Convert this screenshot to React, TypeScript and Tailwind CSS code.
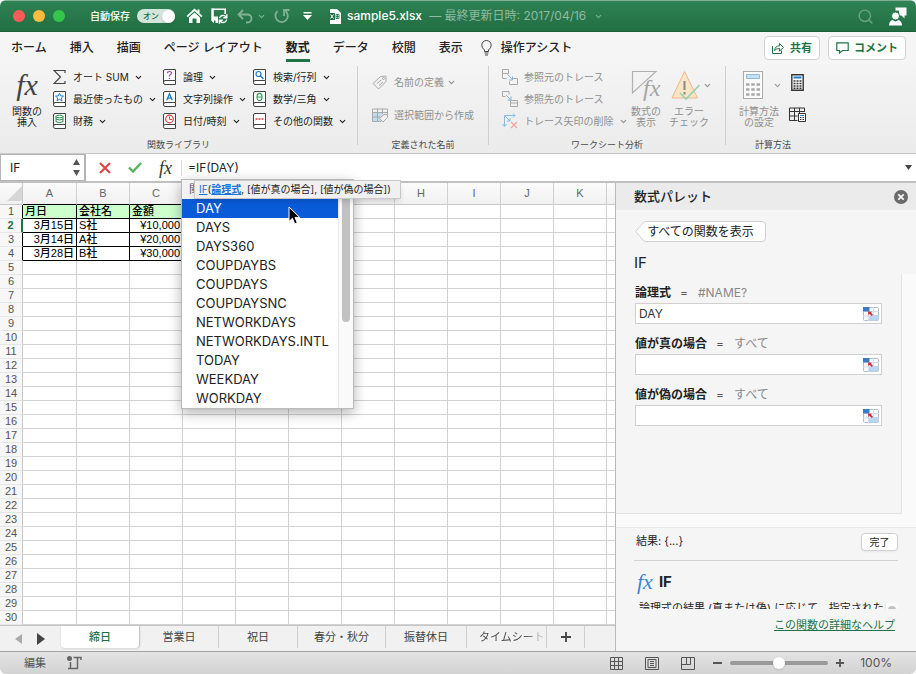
import React, { useState } from 'react';
import { ChevronDown, Search } from 'lucide-react';

const ribbonTabs = ['ホーム', '挿入', '描画', 'ページ レイアウト', '数式', 'データ', '校閲', '表示'];

const columns = ['A', 'B', 'C', 'D', 'E', 'F', 'G', 'H', 'I', 'J', 'K', 'L'];

const sheetData = [
  ['月日', '会社名', '金額'],
  ['3月15日', 'S社', '¥10,000'],
  ['3月14日', 'A社', '¥20,000'],
  ['3月28日', 'B社', '¥30,000'],
];

const suggestions = [
  'DAY',
  'DAYS',
  'DAYS360',
  'COUPDAYBS',
  'COUPDAYS',
  'COUPDAYSNC',
  'NETWORKDAYS',
  'NETWORKDAYS.INTL',
  'TODAY',
  'WEEKDAY',
  'WORKDAY',
];

const sheetTabs = [
  { name: '締日', width: 'w-[79px]' },
  { name: '営業日', width: 'w-[79px]' },
  { name: '祝日', width: 'w-[79px]' },
  { name: '春分・秋分', width: 'w-[88px]' },
  { name: '振替休日', width: 'w-[81px]' },
  { name: 'タイムシート', width: 'w-[80px]' },
];

const Chevron: React.FC<{ className?: string }> = ({ className = '' }) => (
  <ChevronDown size={9} strokeWidth={3} className={`shrink-0 ${className}`} />
);

const Fx: React.FC<{ className?: string }> = ({ className = '' }) => (
  <span className={`font-['Liberation_Serif',serif] font-normal italic ${className}`}>fx</span>
);

/* Book icon shared by the function categories */
const Book: React.FC<{ children?: React.ReactNode }> = ({ children }) => (
  <svg width="13" height="16" viewBox="0 0 13 16" fill="none" className="shrink-0">
    <path d="M12.5 11.5V.5H2Q.5.5.5 2v11.5Q.5 15.5 2 15.5h10.5v-4H2Q.5 11.5.5 13.5" fill="#fff" stroke="#444" />
    {children}
  </svg>
);

const SumIcon = () => (
  <svg width="13" height="16" viewBox="0 0 13 16" fill="none" stroke="#444" strokeWidth="1.2" className="shrink-0">
    <path d="M12 4V1.500H1L7.500 8 1 14.500h11V12" />
  </svg>
);

const libraryItems = [
  { label: 'オート SUM', icon: <SumIcon /> },
  {
    label: '論理',
    icon: (
      <Book>
        <path d="M4.500 4.200Q4.500 2.500 6.500 2.500T8.500 4.300Q8.500 5.300 6.500 6.300V7.500M6.500 8.700v1.300" stroke="#a33fb5" strokeWidth="1.200" />
      </Book>
    ),
  },
  {
    label: '検索/行列',
    icon: (
      <Book>
        <circle cx="5.500" cy="5" r="2.500" stroke="#1a7bd0" strokeWidth="1.200" />
        <path d="M7.300 6.800 10.500 10" stroke="#1a7bd0" strokeWidth="1.500" />
      </Book>
    ),
  },
  {
    label: '最近使ったもの',
    icon: (
      <Book>
        <path d="m6.500 2.200 1.100 2.700 2.900.2-2.200 1.900.7 2.900-2.500-1.600L4 9.900 4.700 7 2.500 5.100l2.900-.2Z" stroke="#1a7bd0" />
      </Book>
    ),
  },
  {
    label: '文字列操作',
    icon: (
      <Book>
        <path d="m3.800 9.300 2.700-6.600 2.700 6.600M4.800 7.200h3.400" stroke="#1a7bd0" strokeWidth="1.300" />
      </Book>
    ),
  },
  {
    label: '数学/三角',
    icon: (
      <Book>
        <ellipse cx="6.500" cy="6" rx="2.500" ry="3.700" stroke="#2ea05a" strokeWidth="1.200" />
        <path d="M4 6h5" stroke="#2ea05a" />
      </Book>
    ),
  },
  {
    label: '財務',
    icon: (
      <Book>
        <ellipse cx="6.500" cy="3.500" rx="3.500" ry="1.300" stroke="#1f8a46" />
        <path d="M3 3.500v5.200q3.500 2 7 0V3.500M3 6q3.500 2 7 0" stroke="#1f8a46" />
      </Book>
    ),
  },
  {
    label: '日付/時刻',
    icon: (
      <Book>
        <circle cx="6.500" cy="6" r="3.800" stroke="#e03a3a" strokeWidth="1.200" />
        <path d="M6.500 3.500V6.500H9" stroke="#e03a3a" />
      </Book>
    ),
  },
  {
    label: 'その他の関数',
    icon: (
      <Book>
        <path d="M2.500 6h2M5.500 6h2M8.500 6h2" stroke="#e03a3a" strokeWidth="1.500" />
      </Book>
    ),
  },
];

const TitleBar = () => {
  const [autoSave, setAutoSave] = useState(true);

  return (
    <header className="flex h-8 items-center border-t border-[#7fae93] border-b border-b-[#1c6038] bg-linear-to-b from-[#2f8355] to-[#216e42] pr-[9px] pl-[13px] text-white">
      <div className="flex gap-2">
        <button aria-label="閉じる" className="size-3 rounded-full bg-[#fc5b57]" />
        <button aria-label="しまう" className="size-3 rounded-full bg-[#fdbc40]" />
        <button aria-label="拡大" className="size-3 rounded-full bg-[#33c748]" />
      </div>
      <span className="ml-[25px] text-[10px] font-medium">自動保存</span>
      <button
        role="switch"
        aria-checked={autoSave}
        aria-label="自動保存"
        onClick={() => setAutoSave(!autoSave)}
        className="ml-[7px] flex h-3.5 w-[38px] items-center justify-between rounded-full bg-[#d3e4da] pl-1.5 text-[8px] font-medium text-[#216e42]"
      >
        オン
        <span className="size-[13px] rounded-full bg-white shadow-sm" />
      </button>
      <button aria-label="ホーム" className="ml-[11px]">
        <svg width="17" height="16" viewBox="0 0 17 16" fill="#fff">
          <path d="M8.500.5.500 8l1.200 1.300 6.800-6.400 6.800 6.400L16.500 8 13.500 5.200V1.500h-2v1.800Z" />
          <path d="M3 9.500 8.500 4.400 14 9.500V15h-3.500v-4.500h-4V15H3Z" />
        </svg>
      </button>
      <button aria-label="保存" className="ml-2">
        <svg width="17" height="16" viewBox="0 0 17 16" fill="none" stroke="#fff">
          <path d="M7 9.200H2.500M1 1.200h13.200V6" strokeWidth="1.600" />
          <path d="M.3.400h2.500v8.500h4.200V15H4.500v-2.500H3V15L.3 12.800Z" fill="#fff" stroke="none" />
          <path d="M8.500 10.200a3.600 3.600 0 0 1 6.500-1.200M15.800 6.200V9.700H12.300M15.700 11.500a3.600 3.600 0 0 1-6.500 1.500M8.400 15.700V12.300h3.400" strokeWidth="1.400" />
        </svg>
      </button>
      <button aria-label="元に戻す" className="ml-[9px] text-[#81b296]">
        <svg width="16" height="15" viewBox="0 0 16 15" fill="none" stroke="currentColor" strokeWidth="1.800">
          <path d="M6 1 1.500 5.500 6 10M1.500 5.500H10.500a4 4 0 0 1 0 8H9" />
        </svg>
      </button>
      <Chevron className="ml-1 text-[#81b296]" />
      <button aria-label="やり直し" className="ml-2 text-[#81b296]">
        <svg width="16" height="16" viewBox="0 0 16 16" fill="none" stroke="currentColor" strokeWidth="1.800">
          <path d="M3.500 3.200A6.200 6.200 0 1 0 11.500 3M10 8V2h5.500" />
        </svg>
      </button>
      <button aria-label="ツールバーのカスタマイズ" className="ml-[13px]">
        <svg width="9" height="9" viewBox="0 0 9 9" fill="#fff">
          <path d="M.5 0h8v1.500h-8ZM0 3h9L4.500 8Z" />
        </svg>
      </button>
      <svg width="12" height="15" viewBox="0 0 12 15" className="ml-[17px]">
        <path d="M1 0h7l4 4v11H1Z" fill="#fff" />
        <path d="M0 4h6v7H0Z" fill="#216e42" />
        <path d="m1.500 5.500 3 4m0-4-3 4" stroke="#fff" />
        <path d="M7 5.500h3v4H7ZM7 7.500h3M8.500 5.500v4" stroke="#216e42" strokeWidth=".8" fill="none" />
      </svg>
      <h1 className="ml-[6px] text-[12px] font-medium whitespace-nowrap">
        sample5.xlsx <span className="ml-1 font-normal text-[#8fbaa1]">— 最終更新日時: 2017/04/16</span>
      </h1>
      <Chevron className="ml-2 text-[#81b296]" />
      <button aria-label="検索" className="ml-auto text-[#6aa482]">
        <Search size={17} strokeWidth={2} />
      </button>
      <button aria-label="アカウント" className="ml-[15px]">
        <svg width="18" height="19" viewBox="0 0 18 19" fill="none">
          <path d="M6.500.500H17.500v8h-2v3l-3-3H10V3.500H6.500Z" fill="#fff" />
          <circle cx="6.500" cy="9" r="4" fill="#fff" stroke="#26764a" />
          <path d="M0 18.500q0-4.500 3.500-5.500l3 1.500 3-1.500q3.500 1 3.500 5.500Z" fill="#fff" />
        </svg>
      </button>
    </header>
  );
};

const RibbonTabs = () => {
  const [active, setActive] = useState('数式');

  return (
    <nav className="flex h-8 items-center bg-[#f5f5f5] pr-2.5 pl-[11px] text-[12px] font-medium text-[#222]">
      <div className="flex items-center gap-[23px]">
        {ribbonTabs.map((tab) => (
          <button
            key={tab}
            onClick={() => setActive(tab)}
            className={`h-7 border-b-3 pt-0.5 whitespace-nowrap ${active === tab ? 'border-[#217346] font-bold' : 'border-transparent'}`}
          >
            {tab}
          </button>
        ))}
      </div>
      <button className="ml-[18px] flex items-center gap-[9px] whitespace-nowrap">
        <svg width="11" height="16" viewBox="0 0 11 16" fill="none" stroke="#444">
          <path d="M3.500 11.500V10Q.8 8 .8 5.200a4.700 4.700 0 0 1 9.400 0Q10.200 8 7.500 10v1.500ZM3.500 13h4M4 15h3" />
        </svg>
        操作アシスト
      </button>
      <button className="ml-auto flex h-6 items-center gap-1.5 rounded border border-[#d2d2d2] bg-white px-[7px] text-[11px] font-bold text-[#217346]">
        <svg width="12" height="12" viewBox="0 0 12 12" fill="none" stroke="currentColor">
          <path d="M.5 4v7.500h9V8.500M2.500 8.500Q3 4 7.500 3.800V1.500l4 4-4 3.500V6.500Q4.500 6.300 2.500 8.500Z" />
        </svg>
        共有
      </button>
      <button className="ml-2 flex h-6 items-center gap-[5px] rounded border border-[#d2d2d2] bg-white px-[7px] text-[11px] font-bold text-[#217346]">
        <svg width="13" height="12" viewBox="0 0 13 12" fill="none" stroke="currentColor" strokeWidth="1.200">
          <path d="M.8.8h11.400v7.700H6.500L3.500 11V8.500H.8Z" />
        </svg>
        コメント
      </button>
    </nav>
  );
};

const GroupLabel: React.FC<{ children: React.ReactNode }> = ({ children }) => (
  <p className="h-5 pt-px text-center text-[9px] leading-6 text-[#4a4a4a]">{children}</p>
);

const Divider = () => <div className="h-[79px] w-px shrink-0 bg-[#cfcfcf]" />;

const Ribbon = () => (
  <section className="flex border-b border-[#c6c6c6] bg-linear-to-b from-[#f4f4f4] to-[#ebebeb] pt-0.5 pb-px text-[10px] whitespace-nowrap text-[#222]">
    <div className="w-[357px] shrink-0">
      <div className="flex h-[66px] pl-[11px]">
        <button className="flex w-8 shrink-0 flex-col items-center leading-[11px]">
          <Fx className="h-10 pt-1 text-[30px] leading-[30px] text-[#444]" />
          関数の
          <br />
          挿入
        </button>
        <div className="ml-[10px] grid grid-cols-[110px_90px_auto] grid-rows-[22px_22px_22px]">
          {libraryItems.map(({ label, icon }) => (
            <button key={label} className="flex items-center">
              {icon}
              <span className="ml-[7px]">{label}</span>
              <Chevron className="ml-[5px]" />
            </button>
          ))}
        </div>
      </div>
      <GroupLabel>関数ライブラリ</GroupLabel>
    </div>
    <Divider />
    <div className="w-[130px] shrink-0 text-[#8f8f8f]">
      <div className="flex h-[66px] flex-col justify-between pt-[9px] pb-[9px] pl-[14px]">
        <button className="flex items-center gap-[7px]" disabled>
          <svg width="15" height="15" viewBox="0 0 15 15" fill="none" stroke="#a9a9a9">
            <path d="M1 8.500 8.500 1.500 14 1v5.500L6.500 14Z" />
            <circle cx="11.500" cy="3.500" r="1" />
            <path d="m5 8.500 4-3.500M7 10.500l4-3.500" />
          </svg>
          名前の定義
          <Chevron className="-ml-1" />
        </button>
        <button className="flex items-center gap-[6px]" disabled>
          <svg width="16" height="15" viewBox="0 0 16 15" fill="none" stroke="#a9a9a9">
            <path d="M.5 4.500h10v9H.5Z" fill="#bfdcf0" stroke="none" />
            <path d="M9 13.500H.5V1h15v5M.5 4.500h15M.5 9H8M5.500 1v12.500M10.500 1v5" />
            <path d="M7.500 10.500 12 6.500l3.500-.3V9.500L11 14Z" fill="#f0f0f0" />
          </svg>
          選択範囲から作成
        </button>
      </div>
      <GroupLabel>定義された名前</GroupLabel>
    </div>
    <Divider />
    <div className="w-[236px] shrink-0 text-[#8f8f8f]">
      <div className="flex h-[66px] pl-[13px]">
        <div className="grid w-[122px] shrink-0 grid-rows-[22px_22px_22px]">
          <button className="flex items-center gap-[6px]" disabled>
            <svg width="16" height="16" viewBox="0 0 16 16" fill="none" stroke="#a9a9a9">
              <path d="M.5.5h6v4h-6ZM.5 4.500v5h4M10.500 9.500h5v6h-8v-3" />
              <path d="m5.500 5.500 5 5M10.500 7.500V11H7" stroke="#7fb5de" />
            </svg>
            参照元のトレース
          </button>
          <button className="flex items-center gap-[6px]" disabled>
            <svg width="16" height="16" viewBox="0 0 16 16" fill="none" stroke="#a9a9a9">
              <path d="M5 .5H.5v5h3M5 .5h2v3M8.500 9.500h7v6h-7ZM8.500 12h7" />
              <path d="m4 4 5 5M9 5.500V9H5.500" stroke="#7fb5de" />
            </svg>
            参照先のトレース
          </button>
          <button className="flex items-center gap-[6px]" disabled>
            <svg width="16" height="16" viewBox="0 0 16 16" fill="none">
              <path d="M2.500 13V2.500H13M11 .5l2 2-2 2M.5 11l2 2.500 2-2.500M3 3l5 5M8 5v3H5" stroke="#86bce3" />
              <path d="m9 9 6 6m0-6-6 6" stroke="#efa3a3" strokeWidth="1.200" />
            </svg>
            トレース矢印の削除
            <Chevron className="-ml-px" />
          </button>
        </div>
        <button className="ml-[7px] flex w-[30px] flex-col items-center leading-[11px]" disabled>
          <span className="relative h-10 w-[30px] pt-[5px]">
            <svg width="30" height="26" viewBox="0 0 30 26" fill="none" stroke="#b0b0b0">
              <path d="M25 .5H1.500V22Z" strokeWidth="1.200" />
            </svg>
            <Fx className="absolute top-2.5 left-3 text-[24px] leading-6 text-[#a5a5a5]" />
          </span>
          数式の
          <br />
          表示
        </button>
        <button className="ml-2 flex flex-col items-center leading-[11px]" disabled>
          <span className="mr-1.5 flex h-10 items-start pt-1">
            <svg width="30" height="31" viewBox="0 0 30 31" fill="none">
              <path d="M13.500 1.500 26.500 28H1Z" fill="#fae5c4" stroke="#f0b58c" />
              <path d="M13.500 11v9M13.500 22v2.500" stroke="#8a8a8a" strokeWidth="2" />
              <path d="m9 23 6 6L28.500 15" stroke="#96d1b0" strokeWidth="1.600" />
            </svg>
          </span>
          エラー
          <br />
          チェック
        </button>
        <Chevron className="mt-[15px] -ml-1.5" />
      </div>
      <GroupLabel>ワークシート分析</GroupLabel>
    </div>
    <Divider />
    <div className="w-[94px] shrink-0">
      <div className="flex h-[66px] pl-[13px]">
        <button className="flex flex-col items-center leading-[11px] text-[#8f8f8f]" disabled>
          <svg width="20" height="40" viewBox="0 0 20 40" fill="none" className="mr-3">
            <rect x=".5" y="5.500" width="19" height="27" fill="#fafafa" stroke="#a9a9a9" />
            <path d="M3.500 8.500h13v4h-13Z" fill="#c6e0f2" stroke="#8fbcdb" />
            <path d="M3 18.500h14M3 23.500h14M3 28.500h14" stroke="#a9a9a9" strokeWidth="2.500" strokeDasharray="3.500 1.750" />
          </svg>
          計算方法
          <br />
          の設定
        </button>
        <Chevron className="mt-[15px] -ml-1.5 text-[#999]" />
        <div className="ml-[7px] flex flex-col gap-4 pt-2">
          <button aria-label="再計算実行" className="flex justify-center">
            <svg width="13" height="17" viewBox="0 0 13 17" fill="none">
              <path d="M.8.8h11.400v15.400H.8Z" fill="#fff" stroke="#333" strokeWidth="1.400" />
              <path d="M2.500 3.500h8" stroke="#1a7bd0" strokeWidth="2" />
              <path d="M2.500 7h8M2.500 9.500h8M2.500 12h8M2.500 14.300h8" stroke="#333" strokeWidth="1.500" strokeDasharray="2 1" />
            </svg>
          </button>
          <button aria-label="シート再計算" className="flex">
            <svg width="17" height="15" viewBox="0 0 17 15" fill="none" stroke="#333">
              <path d="M8.500 13.500H.5V1h15v4M.5 4.500h15M.5 9h8M5.500 1v12.500M10.500 1v5" />
              <path d="M9.500 6.500h7v8h-7Z" fill="#fff" />
              <path d="M11 8.500h4" stroke="#1a7bd0" />
              <path d="M11 10.500h4M11 12.500h4" strokeDasharray="1 .5" />
            </svg>
          </button>
        </div>
      </div>
      <GroupLabel>計算方法</GroupLabel>
    </div>
  </section>
);

const FunctionPopup = () => (
  <div className="absolute top-[25px] left-0 z-10 w-[173px] border border-[#b9b9b9] bg-white shadow-[0_4px_12px_rgba(0,0,0,0.3)]">
    <p className="h-[19px] bg-[#f3f3f3] pl-[7px] text-[11px] leading-[19px] text-[#555]">関数</p>
    <div className="flex">
      <ul className="flex-1 text-[13px] leading-[19px] text-[#222]">
        {suggestions.map((name, i) => (
          <li key={name} className={`h-[19px] pl-[14px] ${i === 0 ? 'bg-[#0a5bd8] text-white' : ''}`}>
            {name}
          </li>
        ))}
      </ul>
      <div className="w-[15px] border-l border-[#e8e8e8] bg-[#fafafa] px-[3px]">
        <div className="h-[123px] rounded-b-full bg-[#c1c1c1]" />
      </div>
    </div>
    <div className="absolute top-0 left-[12px] h-[19px] border border-[#c8c8c8] bg-[#f0f0f0] pr-[9px] pl-1 text-[10px] leading-[17px] whitespace-nowrap text-[#222] shadow-md">
      <a href="#if" className="text-[#1a73d9] underline">IF</a>(
      <a href="#arg" className="font-bold text-[#1a73d9] underline">論理式</a>, [値が真の場合], [値が偽の場合])
    </div>
    <svg width="13" height="19" viewBox="0 0 13 19" className="absolute top-[26px] left-[106px]">
      <path d="M1 1v14.500l3.400-3.200 2.300 5.500 2.600-1.100L7 11.400h4.700Z" fill="#000" stroke="#fff" />
    </svg>
  </div>
);

const FormulaBar = () => {
  const [formula, setFormula] = useState('=IF(DAY)');

  return (
    <section className="flex h-[29px] border-b-2 border-[#c0c0c0] bg-white">
      <div className="flex w-[86px] shrink-0 items-center border border-[#b5b5b5] border-r-2">
        <input aria-label="名前ボックス" defaultValue="IF" className="w-0 flex-1 pl-[9px] text-[12px] text-[#222] outline-none" />
        <button aria-label="セル選択" className="mr-1">
          <svg width="7" height="17" viewBox="0 0 7 17" fill="#555">
            <path d="M3.500 0 7 6H0ZM3.500 17 7 11H0Z" />
          </svg>
        </button>
      </div>
      <div className="flex w-[95px] shrink-0 items-center pl-[13px]">
        <button aria-label="キャンセル">
          <svg width="12" height="12" viewBox="0 0 12 12" stroke="#e04848" strokeWidth="2.200">
            <path d="m1 1 10 10M11 1 1 11" />
          </svg>
        </button>
        <button aria-label="入力" className="ml-[17px]">
          <svg width="14" height="11" viewBox="0 0 14 11" fill="none" stroke="#55b559" strokeWidth="2.400">
            <path d="m1 5.500 4 4L13 1" />
          </svg>
        </button>
        <button aria-label="関数の挿入" className="ml-[17px] flex">
          <Fx className="text-[18px] leading-5 text-[#333]" />
        </button>
      </div>
      <div className="relative flex min-w-0 flex-1 items-center">
        <input
          aria-label="数式バー"
          value={formula}
          onChange={(e) => setFormula(e.target.value)}
          className="h-4 min-w-0 flex-1 border-l border-[#ddd] pl-1.5 text-[12px] text-[#222] outline-none"
        />
        <button aria-label="数式バーの展開" className="mr-1">
          <svg width="7" height="5" viewBox="0 0 7 5" fill="#444">
            <path d="M0 0h7L3.500 5Z" />
          </svg>
        </button>
        <FunctionPopup />
      </div>
    </section>
  );
};

const Grid = () => (
  <table className="w-[659px] table-fixed border-separate border-spacing-0 bg-white font-['Liberation_Sans','Noto_Sans_CJK_JP',sans-serif] text-[11px] leading-[13px]">
    <colgroup>
      <col className="w-[23px]" />
      <col className="w-[54px]" />
      {columns.slice(1).map((c) => (
        <col key={c} className="w-[53px]" />
      ))}
    </colgroup>
    <thead>
      <tr className="h-[22px] bg-linear-to-b from-[#fbfbfb] to-[#f0f0f0] text-[#666]">
        <th className="border-r border-b border-[#c9c9c9] p-0">
          <svg width="15" height="15" viewBox="0 0 15 15" className="ml-auto block">
            <path d="M15 0v15H0Z" fill="#d6d6d6" />
          </svg>
        </th>
        {columns.map((c, i) => (
          <th key={c} className={`border-r border-b border-r-[#d0d0d0] p-0 font-normal ${i < 3 ? 'border-b-black' : 'border-b-[#c9c9c9]'}`}>
            {c}
          </th>
        ))}
      </tr>
    </thead>
    <tbody>
      {Array.from({ length: 30 }, (_, r) => (
        <tr key={r} className="h-[14px]">
          <th
            className={`border-r border-b border-b-[#e6e6e6] bg-[#f7f7f7] p-0 ${
              r === 1 ? 'border-r-2 border-r-[#217346] font-bold text-[#217346]' : r < 4 ? 'border-r-black font-normal text-[#555]' : 'border-r-[#c9c9c9] font-normal text-[#555]'
            }`}
          >
            {r + 1}
          </th>
          {columns.map((c, i) => {
            const filled = r < 4 && i < 3;
            return (
              <td
                key={c}
                className={`overflow-hidden border-r border-b p-0 whitespace-nowrap ${filled ? 'border-black pl-0.5 font-medium text-black' : 'border-[#d2d2d2]'} ${
                  filled && r === 0 ? 'bg-[#ccffcc]' : ''
                } ${filled && r > 0 && i !== 1 ? 'pr-0.5 text-right' : ''}`}
              >
                {filled ? sheetData[r][i] : null}
              </td>
            );
          })}
        </tr>
      ))}
    </tbody>
  </table>
);

const SheetTabs = () => {
  const [active, setActive] = useState('締日');

  return (
    <nav className="flex h-[26px] border-t border-[#c6c6c6] bg-[#f1f1f1] text-[11px] text-[#444]">
      <div className="flex w-[61px] shrink-0 items-center gap-[15px] pl-[15px]">
        <button aria-label="前のシート">
          <svg width="7" height="10" viewBox="0 0 7 10" fill="#aaa">
            <path d="M7 0v10L0 5Z" />
          </svg>
        </button>
        <button aria-label="次のシート">
          <svg width="8" height="12" viewBox="0 0 8 12" fill="#444">
            <path d="M0 0v12l8-6Z" />
          </svg>
        </button>
      </div>
      {sheetTabs.map(({ name, width }, i) => (
        <button
          key={name}
          onClick={() => setActive(name)}
          className={`h-[22px] shrink-0 overflow-hidden border-r whitespace-nowrap ${width} ${
            active === name ? 'rounded-b border-[#c6c6c6] bg-white font-medium text-[#217346] shadow' : 'border-[#cfcfcf]'
          } ${i === sheetTabs.length - 1 ? 'bg-linear-to-r from-[#444] from-70% to-[#eaeaea] bg-clip-text pl-3 text-left text-transparent' : ''}`}
        >
          {name}
        </button>
      ))}
      <button aria-label="シートの追加" className="flex h-[22px] w-[38px] shrink-0 items-center justify-center border-r border-[#cfcfcf]">
        <svg width="10" height="10" viewBox="0 0 10 10" stroke="#444" strokeWidth="1.800">
          <path d="M5 0v10M0 5h10" />
        </svg>
      </button>
    </nav>
  );
};

const ArgumentField: React.FC<{ id: string; label: string; result: string; value?: string }> = ({ id, label, result, value = '' }) => (
  <div className="mb-[10px] text-[12px]">
    <div className="flex h-5 items-center">
      <label htmlFor={id} className="font-bold text-[#222]">{label}</label>
      <span className="ml-[9px] text-[#555]">=</span>
      <span className="ml-[10px] text-[#888]">{result}</span>
    </div>
    <div className="flex h-[21px] items-center border border-[#d0d0d0] bg-white pr-0.5">
      <input id={id} defaultValue={value} className="min-w-0 flex-1 pl-[3px] text-[#333] outline-none" />
      <button aria-label={`${label}のセル範囲を選択`}>
        <svg width="16" height="14" viewBox="0 0 16 14" fill="none">
          <rect x=".5" y=".5" width="15" height="13" rx="1" fill="#f7f9fb" stroke="#b4bcc8" />
          <path d="M0 4.500h16M0 9h16M5.500 0v14M10.500 0v14" stroke="#d5dde6" />
          <path d="M0 0h6.500v4.500H0Z" fill="#3a7bc8" />
          <path d="M9 8h6.500v5.500H6V9.500Z" fill="#b9d5ef" />
          <path d="m5 4.500 4 .3-1 1L10 7.800 8.700 9 6.700 7l-1.300 1Z" fill="#c93030" />
        </svg>
      </button>
    </div>
  </div>
);

const FormulaPalette = () => (
  <aside className="flex w-[301px] shrink-0 flex-col border-l border-[#b9b9b9] bg-[#f5f5f5] text-[#222]">
    <div className="flex h-[27px] items-center justify-between bg-[#ebebeb] pr-2 pl-[18px]">
      <h2 className="text-[13px] font-medium">数式パレット</h2>
      <button aria-label="閉じる">
        <svg width="14" height="14" viewBox="0 0 14 14" fill="none">
          <circle cx="7" cy="7" r="7" fill="#6b6b6b" />
          <path d="m4.300 4.300 5.400 5.400m0-5.400L4.300 9.700" stroke="#fff" strokeWidth="1.800" />
        </svg>
      </button>
    </div>
    <button className="relative mt-[11px] ml-[19px] h-[21px] w-[131px] text-[12px]">
      <svg width="131" height="21" viewBox="0 0 131 21" className="absolute inset-0">
        <path d="M.7 10.500 8 2Q9.300.5 11 .5H127q3.500 0 3.500 3.500v13q0 3.500-3.500 3.500H11q-1.700 0-3-1.500Z" fill="#fff" stroke="#d0d0d0" />
      </svg>
      <span className="relative">すべての関数を表示</span>
    </button>
    <h3 className="ml-[18px] pt-[10px] text-[15px] leading-[22px]">IF</h3>
    <div className="flex h-[240px]">
      <div className="flex-1 border-r border-b border-[#e2e2e2] pt-[9px] pr-[19px] pl-[19px]">
        <ArgumentField id="arg-test" label="論理式" result="#NAME?" value="DAY" />
        <ArgumentField id="arg-true" label="値が真の場合" result="すべて" />
        <ArgumentField id="arg-false" label="値が偽の場合" result="すべて" />
      </div>
      <div className="w-[14px] bg-[#fafafa]" />
    </div>
    <div className="h-[13px] bg-[#fafafa]" />
    <div className="border-t border-[#e8e8e8] pr-[18px] pl-[18px]">
      <div className="flex h-[27px] items-center justify-between text-[11px]">
        <output className="pl-0.5">結果: {'{...}'}</output>
        <button className="h-[18px] w-[37px] rounded border border-[#cfcfcf] bg-white text-[10px] leading-4 shadow-xs">完了</button>
      </div>
      <hr className="mt-[5px] border-[#d4d4d4]" />
      <div className="mt-[7px] flex h-7 items-center gap-1.5 pl-[3px] text-[15px] font-bold">
        <Fx className="text-[22px] leading-6 text-[#3a87d8]" />
        IF
      </div>
      <div className="mt-[5px] flex h-[8px] justify-between overflow-hidden pl-[5px] text-[11px] leading-[15px] whitespace-nowrap">
        <p>論理式の結果 (真または偽) に応じて、指定された</p>
        <div className="mt-0.5 h-5 w-[13px] shrink-0 border-l border-[#e6e6e6] bg-[#fafafa] px-0.5 pt-[3px]">
          <div className="h-5 rounded-full bg-[#c1c1c1]" />
        </div>
      </div>
      <p className="mt-2 pr-[3px] text-right text-[11px]">
        <a href="#help" className="text-[#217346] underline">この関数の詳細なヘルプ</a>
      </p>
    </div>
  </aside>
);

const StatusBar = () => (
  <footer className="flex h-[23px] items-center border-t border-[#a3a3a3] bg-linear-to-b from-[#e3e3e3] to-[#d3d3d3] pr-6 pl-6 text-[11px] text-[#555]">
    <span>編集</span>
    <button aria-label="マクロの記録" className="ml-[21px]">
      <svg width="15" height="14" viewBox="0 0 15 14" fill="none" stroke="#666" strokeWidth="1.500">
        <circle cx="2.500" cy="2.500" r="2.500" fill="#666" stroke="none" />
        <path d="M3.500 6v6.500M1 12.500h9.500V1.500M6.500 1.500h7.500v2.500" />
      </svg>
    </button>
    <div className="ml-auto flex items-center gap-[22px]">
      <button aria-label="標準">
        <svg width="13" height="13" viewBox="0 0 13 13" fill="none" stroke="#555">
          <path d="M.5.5h12v12H.5ZM.5 4.500h12M.5 8.500h12M4.500.5v12M8.500.5v12" />
        </svg>
      </button>
      <button aria-label="ページ レイアウト">
        <svg width="14" height="13" viewBox="0 0 14 13" fill="none" stroke="#555">
          <path d="M.5.5h13v12H.5ZM3 2.500h8v8H3ZM5 4.500h4M5 6.500h4M5 8.500h4" />
        </svg>
      </button>
      <button aria-label="改ページ プレビュー">
        <svg width="14" height="13" viewBox="0 0 14 13" fill="none" stroke="#555">
          <path d="M.5.5h13v12H.5ZM.5 7.500h9V.5M5.500.5v7" />
        </svg>
      </button>
    </div>
    <button aria-label="縮小" className="ml-[18px] h-0.5 w-[9px] bg-[#555]" />
    <input
      type="range"
      aria-label="ズーム"
      min={0}
      max={200}
      defaultValue={100}
      className="mx-2 h-1 w-[98px] appearance-none rounded-full bg-[#9a9a9a] [&::-webkit-slider-thumb]:size-3 [&::-webkit-slider-thumb]:appearance-none [&::-webkit-slider-thumb]:rounded-full [&::-webkit-slider-thumb]:bg-white [&::-webkit-slider-thumb]:shadow"
    />
    <button aria-label="拡大">
      <svg width="8" height="8" viewBox="0 0 8 8" stroke="#555" strokeWidth="1.800">
        <path d="M4 0v8M0 4h8" />
      </svg>
    </button>
    <span className="ml-4 text-[12px]">100%</span>
  </footer>
);

const App: React.FC = () => (
  <div lang="ja" className="overflow-hidden rounded-md bg-white font-['Inter','Noto_Sans_CJK_JP',sans-serif]">
    <TitleBar />
    <RibbonTabs />
    <Ribbon />
    <FormulaBar />
    <main className="flex">
      <div className="flex min-w-0 flex-1 flex-col overflow-hidden">
        <Grid />
        <SheetTabs />
      </div>
      <FormulaPalette />
    </main>
    <StatusBar />
  </div>
);

export default App;
